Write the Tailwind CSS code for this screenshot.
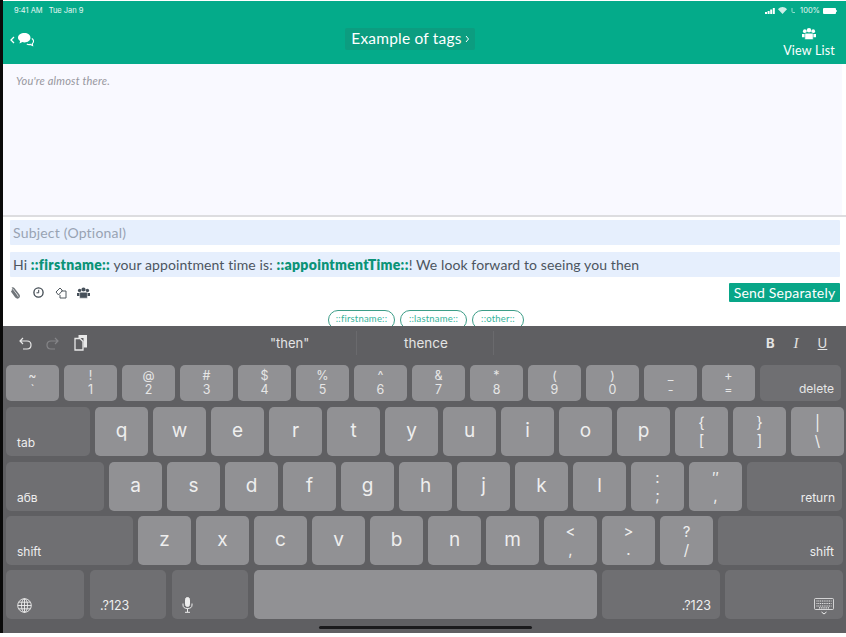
<!DOCTYPE html>
<html lang="en">
<head>
    <meta charset="UTF-8">
    <meta name="viewport" content="width=device-width, initial-scale=1.0">
    <title>Example of tags</title>
    <script src="https://cdn.jsdelivr.net/npm/@tailwindcss/browser@4"></script>
</head>
<body class="bg-white overflow-hidden">
<div class="w-[846px] h-[637px] flex bg-white">
    <!-- black edge of the recording -->
    <div class="w-[3px] h-[633px] bg-[#0a0a0a] shrink-0"></div>

    <div class="flex-1 min-w-0 flex flex-col font-['Lato',sans-serif]">
        <!-- Header -->
        <div class="h-[63px] mt-px bg-[#04ab8a] text-white relative shrink-0">
            <div class="flex justify-between items-center h-[15px] mt-px pl-[11px] pr-[9px] pt-[2px] font-['Inter',sans-serif] text-[7.500px] text-white/90">
                <div class="flex gap-[6px]"><span>9:41 AM</span><span>Tue Jan 9</span></div>
                <div class="flex items-center gap-[3px]">
                    <svg width="10" height="6" viewBox="0 0 10 6" fill="#fff"><rect x="0" y="4" width="2" height="2"/><rect x="2.6" y="3" width="2" height="3"/><rect x="5.2" y="1.5" width="2" height="4.500"/><rect x="7.800" y="0" width="2" height="6"/></svg>
                    <svg width="9" height="7" viewBox="0 0 9 7" fill="#fff" class="opacity-80"><path d="M4.500 7 0 2.200C2.500-.6 6.500-.6 9 2.200Z"/></svg>
                    <svg width="7" height="7" viewBox="0 0 7 7" fill="none" stroke="#8fdccb" stroke-width="1"><path d="M2 1v3.500q0 1 1 1h2"/></svg>
                    <span>100%</span>
                    <svg width="14" height="6" viewBox="0 0 14 6" fill="#fff"><rect width="13" height="6" rx="1"/><rect x="13.300" y="2" width=".7" height="2"/></svg>
                </div>
            </div>
            <div class="absolute left-[7px] top-[32px] flex items-center gap-[3px]">
                <svg width="5" height="8" viewBox="0 0 5 8" fill="none" stroke="#fff" stroke-width="1.300"><path d="M4 1 1 4l3 3"/></svg>
                <svg width="16" height="14" viewBox="0 0 16 14"><path d="M6.500 0C9.800 0 12.500 2 12.500 4.700S9.800 9.400 6.500 9.400c-.8 0-1.500-.1-2.100-.3L1.500 10.500l.6-2.600C.8 7 0 5.900 0 4.700 0 2 2.900 0 6.500 0Z" fill="#fff"/><path d="M13.800 5.500c1.300.7 1.800 1.800 1.700 3-.1.900-.6 1.600-1.200 2.100l.3 2-2.200-1.200c-1.200.3-2.500.2-3.600-.4" fill="none" stroke="#fff" stroke-width="1.100"/></svg>
            </div>
            <div class="absolute left-[342px] top-[27px] h-[22px] w-[130px] rounded-[2px] bg-[#0c9d80] flex items-center justify-center gap-[3px] text-[15.500px] tracking-[0.2px]">
                <span>Example of tags</span>
                <svg width="4" height="8" viewBox="0 0 4 8" fill="none" stroke="#fff" stroke-width="1"><path d="m1 1 2.500 3L1 7"/></svg>
            </div>
            <div class="absolute right-[11px] top-[26px] flex flex-col items-center">
                <svg width="14" height="14" viewBox="0 0 15 13" fill="#fff"><circle cx="3" cy="3.500" r="2"/><circle cx="12" cy="3.500" r="2"/><circle cx="7.500" cy="2.500" r="2.400"/><path d="M0 6.500h3.500V10H0ZM11.500 6.500H15V10h-3.500Z"/><path d="M3.500 5.600h8q.5 0 .5.5V12.500H3V6.100q0-.5.5-.5Z" stroke="#04ab8a" stroke-width=".6"/></svg>
                <span class="text-[12.500px] leading-[14px] mt-[3px] tracking-[0.2px]">View List</span>
            </div>
        </div>

        <!-- Message history -->
        <div class="h-[151px] mr-[4px] bg-[#f9f9ff] pl-[13px] pt-[10px] text-[11px] italic tracking-[0.2px] text-[#97979e] shrink-0 leading-[13px]">You're almost there.</div>
        <div class="h-[2px] bg-[#dddde0] shrink-0"></div>

        <!-- Composer -->
        <div class="pl-[7px] pr-[6px] pt-[3px] bg-white flex flex-col shrink-0">
            <div class="h-[25px] bg-[#e6effd] rounded-[1px] pl-[3px] flex items-center text-[14px] text-[#98a3b3] tracking-[0.2px]">Subject (Optional)</div>
            <div class="h-[25px] mt-[7px] bg-[#e6effd] rounded-[1px] pl-[3px] flex items-center text-[14px] text-[#4c5560] tracking-[0.1px] whitespace-pre">Hi <b class="text-[#0b9377] font-extrabold tracking-[0.3px]">::firstname::</b> your appointment time is: <b class="text-[#0b9377] font-extrabold tracking-[0.3px]">::appointmentTime::</b>! We look forward to seeing you then</div>
            <div class="h-[19px] mt-[6px] flex justify-between items-center">
                <div class="flex items-center">
                    <svg width="10" height="12" viewBox="0 0 10 12" fill="none" stroke="#70757a" stroke-width="1.500"><path d="M2 2.500 7.500 10M1.500 4 5.800 10q1.500 1.500 2.700.5t.3-2.500L3.800 1.500Q3 .5 2 1.200"/></svg>
                    <svg width="11" height="11" viewBox="0 0 11 11" fill="none" stroke="#3f4850" stroke-width="1.300" class="ml-[13px]"><circle cx="5.500" cy="5.500" r="4.600"/><path d="M5.700 2.800v3H3.500" stroke-width="1"/></svg>
                    <svg width="12" height="12" viewBox="0 0 12 12" fill="none" stroke="#50585f" stroke-width="1" class="ml-[11px]"><path d="M1 5 5 1l2.500 2.500L3.500 8Z"/><path d="M6 4h5v7H5V8"/></svg>
                    <svg width="13" height="12" viewBox="0 0 15 13" fill="#46505a" class="ml-[10px]"><circle cx="3" cy="3.500" r="2"/><circle cx="12" cy="3.500" r="2"/><circle cx="7.500" cy="2.500" r="2.400"/><path d="M0 6.500h3.500V10H0ZM11.500 6.500H15V10h-3.500Z"/><path d="M3.500 5.600h8q.5 0 .5.5V12.500H3V6.100q0-.5.5-.5Z" stroke="#fff" stroke-width=".6"/></svg>
                </div>
                <div class="w-[111px] h-[19px] bg-[#08a688] rounded-[1px] text-white text-[14px] tracking-[0.2px] flex items-center justify-center">Send Separately</div>
            </div>
            <!-- Tag chips, cut off by the keyboard -->
            <div class="h-[16px] mt-[8px] overflow-hidden flex gap-[5px] pl-[318px] text-[9.500px] text-[#36b49b]">
                <div class="w-[67px] h-[20px] shrink-0 rounded-full border border-[#3d9d88] flex justify-center pt-[2px] leading-[12px] tracking-[0.2px]">::firstname::</div>
                <div class="w-[67px] h-[20px] shrink-0 rounded-full border border-[#3d9d88] flex justify-center pt-[2px] leading-[12px] tracking-[0.2px]">::lastname::</div>
                <div class="w-[52px] h-[20px] shrink-0 rounded-full border border-[#3d9d88] flex justify-center pt-[2px] leading-[12px] tracking-[0.2px]">::other::</div>
            </div>
        </div>

        <!-- Keyboard -->
        <div class="h-[307px] bg-[#5f5f62] flex flex-col font-['Inter',sans-serif] text-[#eeeeee] shrink-0 relative">
            <!-- Shortcut bar -->
            <div class="h-[34px] flex items-center relative shrink-0">
                <div class="flex items-center gap-[14px] pl-[16px]">
                    <svg width="13" height="13" viewBox="0 0 13 13" fill="none" stroke="#e8e8e8" stroke-width="1.200"><path d="M4 1 1 4l3 3M1 4h7q4 0 4 4t-4 4H4"/></svg>
                    <svg width="13" height="13" viewBox="0 0 13 13" fill="none" stroke="#858588" stroke-width="1.200"><path d="m9 1 3 3-3 3M12 4H5Q1 4 1 8t4 4h4"/></svg>
                    <svg width="13" height="16" viewBox="0 0 13 16" class="ml-[1px]"><path d="M4.500 0H13v12.500H9.500V3H4.500Z" fill="#e8e8e8"/><path d="M1 3.500h5l3 3V15H1Z" fill="#5f5f62" stroke="#e8e8e8" stroke-width="1.300"/></svg>
                </div>
                <span class="absolute left-[267px] top-[8px] text-[13px] leading-[18px] text-[#e4e4e4]">"then"</span>
                <div class="absolute left-[353px] top-[5px] h-[24px] w-px bg-[#6a6a6d]"></div>
                <span class="absolute left-[401px] top-[8px] text-[13.500px] leading-[18px] text-[#e4e4e4]">thence</span>
                <div class="absolute left-[490px] top-[5px] h-[24px] w-px bg-[#6a6a6d]"></div>
                <div class="absolute left-[763px] top-[8px] flex items-center text-[13px] leading-[18px] gap-[19px] text-[#e4e4e4]">
                    <b>B</b><i class="font-['Liberation_Serif',serif] text-[15px]">I</i><u>U</u>
                </div>
            </div>

            <!-- Number row -->
            <div class="flex gap-[5px] pl-[3px] h-[36px] mt-[5px] shrink-0 text-[12.500px] leading-[14px] text-[#e6e6e6]">
                <div class="w-[53px] bg-[#919194] rounded-[5px] flex flex-col items-center justify-center"><span>~</span><span>`</span></div>
                <div class="w-[53px] bg-[#919194] rounded-[5px] flex flex-col items-center justify-center"><span>!</span><span>1</span></div>
                <div class="w-[53px] bg-[#919194] rounded-[5px] flex flex-col items-center justify-center"><span>@</span><span>2</span></div>
                <div class="w-[53px] bg-[#919194] rounded-[5px] flex flex-col items-center justify-center"><span>#</span><span>3</span></div>
                <div class="w-[53px] bg-[#919194] rounded-[5px] flex flex-col items-center justify-center"><span>$</span><span>4</span></div>
                <div class="w-[53px] bg-[#919194] rounded-[5px] flex flex-col items-center justify-center"><span>%</span><span>5</span></div>
                <div class="w-[53px] bg-[#919194] rounded-[5px] flex flex-col items-center justify-center"><span>^</span><span>6</span></div>
                <div class="w-[53px] bg-[#919194] rounded-[5px] flex flex-col items-center justify-center"><span>&amp;</span><span>7</span></div>
                <div class="w-[53px] bg-[#919194] rounded-[5px] flex flex-col items-center justify-center"><span>*</span><span>8</span></div>
                <div class="w-[53px] bg-[#919194] rounded-[5px] flex flex-col items-center justify-center"><span>(</span><span>9</span></div>
                <div class="w-[53px] bg-[#919194] rounded-[5px] flex flex-col items-center justify-center"><span>)</span><span>0</span></div>
                <div class="w-[53px] bg-[#919194] rounded-[5px] flex flex-col items-center justify-center"><span>_</span><span>-</span></div>
                <div class="w-[53px] bg-[#919194] rounded-[5px] flex flex-col items-center justify-center"><span>+</span><span>=</span></div>
                <div class="w-[81px] bg-[#6f6f72] rounded-[5px] flex items-end justify-end pr-[7px] pb-[5px] text-[12px]">delete</div>
            </div>

            <!-- qwerty row -->
            <div class="flex gap-[5px] pl-[3px] h-[49px] mt-[6px] shrink-0 text-[19px]">
                <div class="w-[84px] bg-[#6f6f72] rounded-[5px] flex items-end pl-[11px] pb-[5px] text-[12px] leading-[16px]">tab</div>
                <div class="w-[53px] bg-[#919194] rounded-[5px] flex items-center justify-center">q</div>
                <div class="w-[53px] bg-[#919194] rounded-[5px] flex items-center justify-center">w</div>
                <div class="w-[53px] bg-[#919194] rounded-[5px] flex items-center justify-center">e</div>
                <div class="w-[53px] bg-[#919194] rounded-[5px] flex items-center justify-center">r</div>
                <div class="w-[53px] bg-[#919194] rounded-[5px] flex items-center justify-center">t</div>
                <div class="w-[53px] bg-[#919194] rounded-[5px] flex items-center justify-center">y</div>
                <div class="w-[53px] bg-[#919194] rounded-[5px] flex items-center justify-center">u</div>
                <div class="w-[53px] bg-[#919194] rounded-[5px] flex items-center justify-center">i</div>
                <div class="w-[53px] bg-[#919194] rounded-[5px] flex items-center justify-center">o</div>
                <div class="w-[53px] bg-[#919194] rounded-[5px] flex items-center justify-center">p</div>
                <div class="w-[53px] bg-[#919194] rounded-[5px] flex flex-col items-center justify-center text-[15px] leading-[18px]"><span>{</span><span>[</span></div>
                <div class="w-[53px] bg-[#919194] rounded-[5px] flex flex-col items-center justify-center text-[15px] leading-[18px]"><span>}</span><span>]</span></div>
                <div class="w-[53px] bg-[#919194] rounded-[5px] flex flex-col items-center justify-center text-[15px] leading-[18px]"><span>|</span><span>\</span></div>
            </div>

            <!-- asdf row -->
            <div class="flex gap-[5px] pl-[3px] h-[49px] mt-[6px] shrink-0 text-[19px]">
                <div class="w-[98px] bg-[#6f6f72] rounded-[5px] flex items-end pl-[11px] pb-[5px] text-[12px] leading-[16px]">абв</div>
                <div class="w-[53px] bg-[#919194] rounded-[5px] flex items-center justify-center">a</div>
                <div class="w-[53px] bg-[#919194] rounded-[5px] flex items-center justify-center">s</div>
                <div class="w-[53px] bg-[#919194] rounded-[5px] flex items-center justify-center">d</div>
                <div class="w-[53px] bg-[#919194] rounded-[5px] flex items-center justify-center">f</div>
                <div class="w-[53px] bg-[#919194] rounded-[5px] flex items-center justify-center">g</div>
                <div class="w-[53px] bg-[#919194] rounded-[5px] flex items-center justify-center">h</div>
                <div class="w-[53px] bg-[#919194] rounded-[5px] flex items-center justify-center">j</div>
                <div class="w-[53px] bg-[#919194] rounded-[5px] flex items-center justify-center">k</div>
                <div class="w-[53px] bg-[#919194] rounded-[5px] flex items-center justify-center">l</div>
                <div class="w-[53px] bg-[#919194] rounded-[5px] flex flex-col items-center justify-center text-[15px] leading-[18px]"><span>:</span><span>;</span></div>
                <div class="w-[53px] bg-[#919194] rounded-[5px] flex flex-col items-center justify-center text-[15px] leading-[18px]"><span>″</span><span>,</span></div>
                <div class="w-[95px] bg-[#6f6f72] rounded-[5px] flex items-end justify-end pr-[7px] pb-[5px] text-[12px] leading-[16px]">return</div>
            </div>

            <!-- zxcv row -->
            <div class="flex gap-[5px] pl-[3px] h-[49px] mt-[5px] shrink-0 text-[19px]">
                <div class="w-[127px] bg-[#6f6f72] rounded-[5px] flex items-end pl-[11px] pb-[5px] text-[12px] leading-[16px]">shift</div>
                <div class="w-[53px] bg-[#919194] rounded-[5px] flex items-center justify-center">z</div>
                <div class="w-[53px] bg-[#919194] rounded-[5px] flex items-center justify-center">x</div>
                <div class="w-[53px] bg-[#919194] rounded-[5px] flex items-center justify-center">c</div>
                <div class="w-[53px] bg-[#919194] rounded-[5px] flex items-center justify-center">v</div>
                <div class="w-[53px] bg-[#919194] rounded-[5px] flex items-center justify-center">b</div>
                <div class="w-[53px] bg-[#919194] rounded-[5px] flex items-center justify-center">n</div>
                <div class="w-[53px] bg-[#919194] rounded-[5px] flex items-center justify-center">m</div>
                <div class="w-[53px] bg-[#919194] rounded-[5px] flex flex-col items-center justify-center text-[15px] leading-[18px]"><span>&lt;</span><span>,</span></div>
                <div class="w-[53px] bg-[#919194] rounded-[5px] flex flex-col items-center justify-center text-[15px] leading-[18px]"><span>&gt;</span><span>.</span></div>
                <div class="w-[53px] bg-[#919194] rounded-[5px] flex flex-col items-center justify-center text-[15px] leading-[18px]"><span>?</span><span>/</span></div>
                <div class="w-[125px] bg-[#6f6f72] rounded-[5px] flex items-end justify-end pr-[9px] pb-[5px] text-[12px] leading-[16px]">shift</div>
            </div>

            <!-- Bottom row -->
            <div class="flex gap-[5px] pl-[3px] h-[49px] mt-[5px] shrink-0 text-[12.500px]">
                <div class="w-[78px] bg-[#6f6f72] rounded-[5px] flex items-end pl-[11px] pb-[6px]">
                    <svg width="15" height="15" viewBox="0 0 15 15" fill="none" stroke="#eee" stroke-width=".9"><circle cx="7.500" cy="7.500" r="6.800"/><ellipse cx="7.500" cy="7.500" rx="3" ry="6.800"/><path d="M7.500.7v13.600M.7 7.500h13.600M1.700 4.200h11.600M1.700 10.800h11.600"/></svg>
                </div>
                <div class="w-[76px] ml-px bg-[#6f6f72] rounded-[5px] flex items-end pl-[10px] pb-[5px] leading-[16px]">.?123</div>
                <div class="w-[76px] ml-px bg-[#6f6f72] rounded-[5px] flex items-end pl-[10px] pb-[6px]">
                    <svg width="11" height="16" viewBox="0 0 11 16" fill="none" stroke="#eee" stroke-width="1"><rect x="3.500" y=".5" width="4" height="9" rx="2" fill="#eee"/><path d="M1 6.500v1.500q0 3.500 4.500 3.500T10 8V6.500M5.500 11.500V15M3 15.300h5"/></svg>
                </div>
                <div class="w-[343px] ml-px bg-[#919194] rounded-[5px]"></div>
                <div class="w-[118px] bg-[#6f6f72] rounded-[5px] flex items-end justify-end pr-[9px] pb-[5px] leading-[16px]">.?123</div>
                <div class="w-[118px] bg-[#6f6f72] rounded-[5px] flex items-end justify-end pr-[9px] pb-[3px]">
                    <svg width="20" height="18" viewBox="0 0 20 18" fill="none" stroke="#eee" stroke-width=".8"><rect x=".5" y=".5" width="19" height="11" rx="1"/><path d="M2.500 3h15M2.500 5.500h15M2.500 8h15M5 9.800h10" stroke-dasharray="1 .8" stroke-width="1.200"/><path d="m7.500 14 2.500 2 2.500-2" stroke-width="1"/></svg>
                </div>
            </div>

            <!-- Home indicator -->
            <div class="absolute left-[316px] bottom-[4px] w-[213px] h-[3px] rounded-full bg-[#1a1a1c]"></div>
        </div>
    </div>
</div>
</body>
</html>
